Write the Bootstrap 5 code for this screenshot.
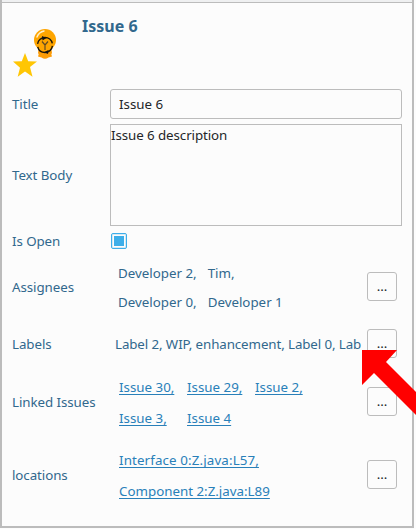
<!DOCTYPE html>
<html lang="en">
<head>
<meta charset="utf-8">
<meta name="viewport" content="width=device-width, initial-scale=1">
<title>Issue 6</title>
<link href="https://cdn.jsdelivr.net/npm/bootstrap@5.3.0/dist/css/bootstrap.min.css" rel="stylesheet">
<style>
body{width:416px;height:529px;background:#fcfcfc;font:13.33px/18px "Noto Sans",sans-serif;color:#31688d}
.panel{width:414px;height:528px;border:2px solid #bcbcbc;border-top:0;background:#fcfcfc}
.top-strip{height:3px;background:#eff0f1;border-bottom:1px solid #bcbcbc}
.head{height:86px}
.head h1{font-size:16px;line-height:22px;font-weight:700;margin:12px 0 0 80px}
.icons{left:10px;top:25px}
.prop{padding-left:10px;padding-right:10px}
.prop-name{width:98px;flex:none;letter-spacing:-.07px}
.field-title{height:30px;padding:0 8px;border:1px solid #bcbcbc;border-radius:3px;background:#fcfcfc;color:#232629;font-size:inherit}
.field-body{height:102px;padding:1px 0;border:1px solid #bcbcbc;border-radius:0;background:#fcfcfc;color:#232629;font-size:inherit;line-height:18px;letter-spacing:-.08px;resize:none}
.field-title,.field-body{width:292px}
.r-body{margin-top:5px}
.check{width:16px;height:16px;border:1px solid #3daee9;border-radius:2px;padding:2px;margin:0 0 0 1px;background:#3daee9 content-box;box-shadow:inset 0 0 0 1px #d5e9f4}
.r-open{height:32px;padding-bottom:3px}.r-57{height:57px}.r-59{height:59px}.r-loc{height:87px}
.values{width:257px;flex:none}
.people{padding:1px 0 0 8px;row-gap:11px}
.people .person-line{column-gap:11px}
.links{padding:2px 0 0 9px;column-gap:12px;row-gap:13px;grid-template-columns:56px 56px 56px}
.links a{color:#2980b9;text-decoration:underline;text-underline-offset:2px;text-decoration-thickness:1px;text-decoration-skip-ink:none;justify-self:start}
.links .wide{letter-spacing:.13px}
.label-list{padding-left:5px;letter-spacing:-.1px}
.more{width:30px;height:29px;padding:0;border:1px solid #bcbcbc;border-radius:3px;background:#fcfcfc;color:#232629;font-size:13.33px;line-height:27px}
.pointer{left:362px;top:350px}
</style>
</head>
<body class="position-relative overflow-hidden">
<div class="panel">
  <div class="top-strip"></div>
  <div class="head position-relative d-flex align-items-start">
    <svg class="icons position-absolute" width="50" height="52" viewBox="12 28 50 52">
      <path d="M38.500 50h13l.5 3-.7 1.200.7 2.300-3.500 1q-3.500 2.500-7 0l-3.500-1 .7-2.300-.7-1.200z" fill="#fd9c07"/>
      <circle cx="45" cy="40" r="11" fill="#fea500"/>
      <path d="M37 37q2-5 7-6" fill="none" stroke="#fff0c8" stroke-width="1.500" stroke-linecap="round"/>
      <circle cx="45" cy="45" r="7.500" fill="none" stroke="#1c1608" stroke-width="1.400" stroke-dasharray="20.560 3" stroke-dashoffset="-1"/>
      <path d="M42 36l4.500 2-4 2.500zM48.500 50l-4.500 2.200 4 1.800z" fill="#111"/>
      <path d="M42 41.500l3 3.500 3-3.500M45 45V50" fill="none" stroke="#604b25" stroke-width="1.200"/>
      <path d="M25 53l3.200 8.300 8.800.2-7 5.500 2.500 9.700-7.500-5.100-7.300 5.100 2.300-9-7-6.200 8.800-.2z" fill="#ffc604"/>
    </svg>
    <h1>Issue 6</h1>
  </div>
  <div class="prop d-flex align-items-center"><label class="prop-name" for="t">Title</label><input id="t" class="form-control field-title" value="Issue 6"></div>
  <div class="prop r-body d-flex align-items-center"><label class="prop-name" for="b">Text Body</label><textarea id="b" class="form-control field-body">Issue 6 description</textarea></div>
  <div class="prop r-open d-flex align-items-center"><span class="prop-name">Is Open</span><span class="check d-block"></span></div>
  <div class="prop r-57 d-flex align-items-center"><span class="prop-name">Assignees</span>
    <div class="values people d-flex flex-column">
      <div class="person-line d-flex"><span>Developer 2,</span><span>Tim,</span></div>
      <div class="person-line d-flex"><span>Developer 0,</span><span>Developer 1</span></div>
    </div>
    <button class="btn more">...</button></div>
  <div class="prop r-57 d-flex align-items-center"><span class="prop-name">Labels</span>
    <div class="values label-list text-nowrap">Label 2, WIP, enhancement, Label 0, Lab</div>
    <button class="btn more">...</button></div>
  <div class="prop r-59 d-flex align-items-center"><span class="prop-name">Linked Issues</span>
    <div class="values links d-grid"><a href="#">Issue 30,</a><a href="#">Issue 29,</a><a href="#">Issue 2,</a><a href="#">Issue 3,</a><a href="#">Issue 4</a></div>
    <button class="btn more">...</button></div>
  <div class="prop r-loc d-flex align-items-center"><span class="prop-name">locations</span>
    <div class="values links d-flex flex-column align-items-start"><a class="wide" href="#">Interface 0:Z.java:L57,</a><a href="#">Component 2:Z.java:L89</a></div>
    <button class="btn more">...</button></div>
</div>
<svg class="pointer position-absolute" width="54" height="66" viewBox="362 350 54 66"><path d="M362 350h35l-11 12 30 30v23l-42-42-12 12z" fill="#f00"/></svg>
<script src="https://cdn.jsdelivr.net/npm/bootstrap@5.3.0/dist/js/bootstrap.bundle.min.js"></script>
</body>
</html>
